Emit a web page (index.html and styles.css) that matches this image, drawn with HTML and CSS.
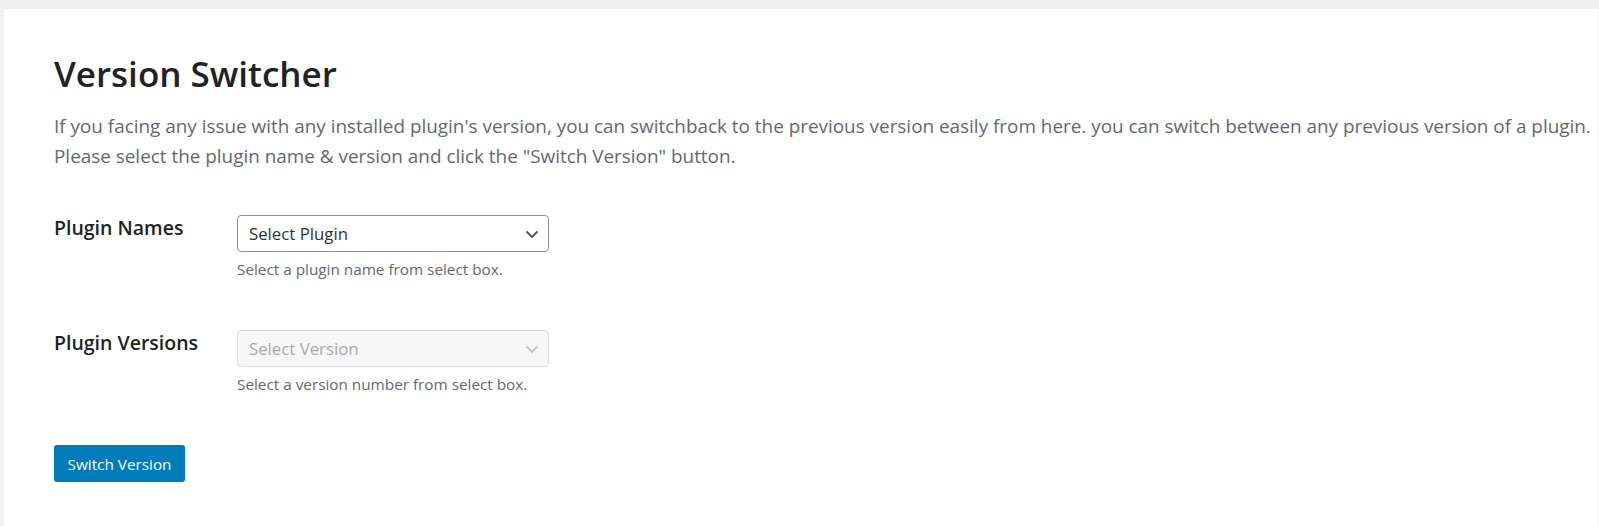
FILE: index.html
```html
<!DOCTYPE html>
<html lang="en">
<head>
<meta charset="utf-8">
<title>Version Switcher</title>
<link rel="stylesheet" href="styles.css">
</head>
<body>
<div class="panel">
  <h1 class="title">Version Switcher</h1>
  <p class="intro">If you facing any issue with any installed plugin's version, you can switchback to the previous version easily from here. you can switch between any previous version of a plugin.<br>Please select the plugin name &amp; version and click the "Switch Version" button.</p>
  <div class="form">
    <div class="row">
      <div class="label">Plugin Names</div>
      <div class="field">
        <div class="select">
          <span>Select Plugin</span>
          <svg class="chev" width="18" height="18" viewBox="0 0 18 18"><path d="M3.5 6.5 L9 12 L14.5 6.5" fill="none" stroke="currentColor" stroke-width="1.9"/></svg>
        </div>
        <div class="help">Select a plugin name from select box.</div>
      </div>
    </div>
    <div class="row">
      <div class="label">Plugin Versions</div>
      <div class="field">
        <div class="select disabled">
          <span>Select Version</span>
          <svg class="chev" width="18" height="18" viewBox="0 0 18 18"><path d="M3.5 6.5 L9 12 L14.5 6.5" fill="none" stroke="currentColor" stroke-width="1.9"/></svg>
        </div>
        <div class="help">Select a version number from select box.</div>
      </div>
    </div>
  </div>
  <button class="btn">Switch Version</button>
</div>
</body>
</html>
```
FILE: styles.css
```css
html, body {
  margin: 0;
  padding: 0;
  background: #f0f0f1;
}
body {
  padding: 9px 1px 0 4px;
  font-family: "Open Sans", "Noto Sans", sans-serif;
  color: #1d2327;
}
.panel {
  background: #fff;
  min-height: 517px;
  padding: 40px 0 0 50px;
  box-sizing: border-box;
}
.title {
  margin: 0;
  font-size: 35px;
  font-weight: 600;
  line-height: 50px;
  color: #1d2327;
}
.intro {
  margin: 13px 0 0;
  font-size: 18.9px;
  line-height: 29.5px;
  color: #646970;
  white-space: nowrap;
}
.form {
  margin-top: 44px;
  display: flex;
  flex-direction: column;
  gap: 50px;
}
.row {
  display: flex;
}
.label {
  width: 183px;
  font-size: 19.5px;
  font-weight: 600;
  line-height: 26px;
}
.field {
  display: flex;
  flex-direction: column;
  gap: 6px;
}
.select {
  width: 312px;
  height: 37px;
  box-sizing: border-box;
  border: 1px solid #8c8f94;
  border-radius: 4px;
  display: flex;
  align-items: center;
  justify-content: space-between;
  padding: 0 7px 0 11px;
  font-size: 16.8px;
  color: #2c3338;
}
.select.disabled {
  background: #f7f7f7;
  border-color: #dcdcde;
  color: #a7aaad;
}
.chev { color: #50575e; }
.select.disabled .chev { color: #c3c4c7; }
.help {
  font-size: 15.3px;
  line-height: 22px;
  color: #646970;
}
.btn {
  margin-top: 50px;
  width: 131px;
  height: 37px;
  background: #007cba;
  border: none;
  border-radius: 3px;
  color: #fff;
  font-family: inherit;
  font-size: 15.3px;
  padding: 0;
}
```
